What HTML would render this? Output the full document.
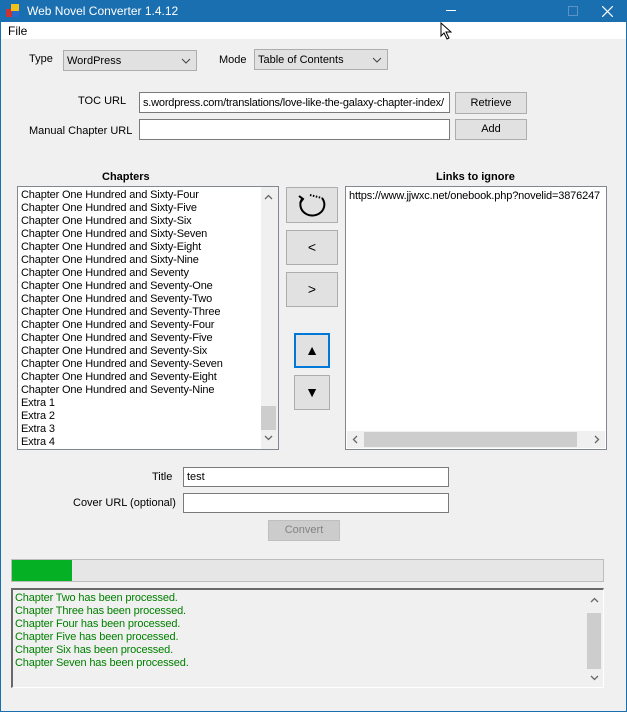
<!DOCTYPE html>
<html><head><style>
*{box-sizing:border-box;margin:0;padding:0}
body{width:627px;height:712px;overflow:hidden;background:#f0f0f0;font-family:"Liberation Sans",sans-serif;font-size:11px;color:#000;position:relative}
.a{position:absolute}
.win{left:0;top:0;width:627px;height:712px;border:1px solid #1a6fb0;border-top:none}
.title{left:0;top:0;width:627px;height:22px;background:#1a6fb0;color:#fff;font-size:12px}
.menu{left:1px;top:22px;width:625px;height:17px;background:#fff;font-size:12px}
.tb{background:#fff;border:1px solid #7a7a7a;padding:3px 3px;white-space:nowrap;overflow:hidden}
.btn{background:#e1e1e1;border:1px solid #adadad;text-align:center}
.cb{background:#e1e1e1;border:1px solid #adadad;padding:4px 3px;font-size:11px}
.list{background:#fff;border:1px solid #828790;overflow:hidden}
.list div{height:13px;line-height:13px;white-space:nowrap;letter-spacing:-0.15px}
.lbl{white-space:nowrap}
</style></head><body>
<div class="a title">
 <svg class="a" style="left:6px;top:4px" width="14" height="14"><rect x="0" y="5" width="6" height="8" fill="#c33"/><rect x="5" y="0" width="8" height="7" fill="#f3c21a"/><rect x="7" y="7" width="6" height="6" fill="#2a6ad0"/></svg>
 <span class="a" style="left:27px;top:4px">Web Novel Converter 1.4.12</span>
 <div class="a" style="left:446px;top:10px;width:10px;height:1px;background:#fff"></div>
 <div class="a" style="left:568px;top:6px;width:10px;height:10px;border:1px solid #5d92c4"></div>
 <svg class="a" style="left:602px;top:6px" width="11" height="11"><path d="M0 0L11 11M11 0L0 11" stroke="#fff" stroke-width="1.2"/></svg>
</div>
<div class="a menu"><span class="a" style="left:7px;top:2px">File</span></div>
<svg class="a" style="left:440px;top:22px" width="12" height="18"><path d="M1 1L1 14L4 11L7 17L9 16L6 10L11 10Z" fill="#fff" stroke="#000"/></svg>

<span class="a lbl" style="left:29px;top:53px">Type</span>
<div class="a cb" style="left:63px;top:50px;width:134px;height:21px">WordPress<svg class="a" style="right:5px;top:7px" width="10" height="6"><path d="M1 1L5 5L9 1" fill="none" stroke="#444"/></svg></div>
<span class="a lbl" style="left:219px;top:54px">Mode</span>
<div class="a cb" style="left:254px;top:49px;width:134px;height:21px">Table of Contents<svg class="a" style="right:5px;top:7px" width="10" height="6"><path d="M1 1L5 5L9 1" fill="none" stroke="#444"/></svg></div>

<span class="a lbl" style="left:78px;top:95px">TOC URL</span>
<div class="a tb" style="left:139px;top:92px;width:311px;height:21px;font-size:11px;padding-top:4px;letter-spacing:-0.2px">s.wordpress.com/translations/love-like-the-galaxy-chapter-index/</div>
<div class="a btn" style="left:455px;top:92px;width:72px;height:22px;line-height:20px">Retrieve</div>
<span class="a lbl" style="left:29px;top:125px">Manual Chapter URL</span>
<div class="a tb" style="left:139px;top:119px;width:311px;height:21px"></div>
<div class="a btn" style="left:455px;top:119px;width:72px;height:21px;line-height:19px">Add</div>

<span class="a lbl" style="left:102px;top:171px;font-weight:bold">Chapters</span>
<div class="a list" style="left:17px;top:186px;width:262px;height:264px;padding:2px 0 0 3px;font-size:11px;color:#000">
<div>Chapter One Hundred and Sixty-Four</div><div>Chapter One Hundred and Sixty-Five</div><div>Chapter One Hundred and Sixty-Six</div><div>Chapter One Hundred and Sixty-Seven</div><div>Chapter One Hundred and Sixty-Eight</div><div>Chapter One Hundred and Sixty-Nine</div><div>Chapter One Hundred and Seventy</div><div>Chapter One Hundred and Seventy-One</div><div>Chapter One Hundred and Seventy-Two</div><div>Chapter One Hundred and Seventy-Three</div><div>Chapter One Hundred and Seventy-Four</div><div>Chapter One Hundred and Seventy-Five</div><div>Chapter One Hundred and Seventy-Six</div><div>Chapter One Hundred and Seventy-Seven</div><div>Chapter One Hundred and Seventy-Eight</div><div>Chapter One Hundred and Seventy-Nine</div><div>Extra 1</div><div>Extra 2</div><div>Extra 3</div><div>Extra 4</div>
</div>
<div class="a" style="left:261px;top:187px;width:17px;height:262px;background:#f0f0f0"></div>
<div class="a" style="left:261px;top:406px;width:15px;height:24px;background:#cdcdcd"></div>
<svg class="a" style="left:264px;top:194px" width="9" height="6"><path d="M1 5L4.5 1.5L8 5" fill="none" stroke="#666" stroke-width="1.3"/></svg>
<svg class="a" style="left:264px;top:435px" width="9" height="6"><path d="M1 1L4.5 4.5L8 1" fill="none" stroke="#666" stroke-width="1.3"/></svg>

<div class="a btn" style="left:286px;top:187px;width:52px;height:36px"><svg width="50" height="34"><path d="M15 11 A12 11 0 1 0 35 10" fill="none" stroke="#000" stroke-width="2"/><path d="M12 8L16 11L13 15" fill="none" stroke="#000" stroke-width="2"/><path d="M23 7L35 10" stroke="#000" stroke-width="2" stroke-dasharray="1.5 1.5"/></svg></div>
<div class="a btn" style="left:286px;top:230px;width:52px;height:35px;line-height:33px;font-size:14px">&lt;</div>
<div class="a btn" style="left:286px;top:272px;width:52px;height:35px;line-height:33px;font-size:14px">&gt;</div>
<div class="a btn" style="left:294px;top:333px;width:36px;height:35px;border:2px solid #0078d7;line-height:31px;font-size:14px">&#9650;</div>
<div class="a btn" style="left:294px;top:375px;width:36px;height:35px;line-height:33px;font-size:14px">&#9660;</div>

<span class="a lbl" style="left:436px;top:171px;font-weight:bold">Links to ignore</span>
<div class="a list" style="left:345px;top:186px;width:262px;height:264px;padding:3px 0 0 3px;font-size:11px">
<div>https://www.jjwxc.net/onebook.php?novelid=3876247</div></div>
<div class="a" style="left:347px;top:431px;width:258px;height:17px;background:#f0f0f0"></div>
<div class="a" style="left:364px;top:432px;width:213px;height:15px;background:#cdcdcd"></div>
<svg class="a" style="left:352px;top:435px" width="6" height="9"><path d="M5 1L1.5 4.5L5 8" fill="none" stroke="#666" stroke-width="1.3"/></svg>
<svg class="a" style="left:594px;top:435px" width="6" height="9"><path d="M1 1L4.5 4.5L1 8" fill="none" stroke="#666" stroke-width="1.3"/></svg>

<span class="a lbl" style="left:152px;top:471px">Title</span>
<div class="a tb" style="left:183px;top:467px;width:266px;height:20px;padding-top:3px">test</div>
<span class="a lbl" style="left:73px;top:497px">Cover URL (optional)</span>
<div class="a tb" style="left:183px;top:493px;width:266px;height:20px"></div>
<div class="a btn" style="left:268px;top:520px;width:72px;height:21px;line-height:19px;background:#ccc;border-color:#bfbfbf;color:#838383;font-size:11px">Convert</div>

<div class="a" style="left:11px;top:559px;width:593px;height:23px;background:#e6e6e6;border:1px solid #bcbcbc"></div>
<div class="a" style="left:12px;top:560px;width:60px;height:21px;background:#06b025"></div>

<div class="a" style="left:11px;top:588px;width:593px;height:100px;background:#f0f0f0;border:1px solid #828282;border-top:2px solid #696969;border-left:2px solid #696969;border-right-color:#fff;border-bottom-color:#fff;color:#008000;padding:2px 0 0 2px;font-size:11px;line-height:13px;letter-spacing:-0.15px">
<div>Chapter Two has been processed.</div><div>Chapter Three has been processed.</div><div>Chapter Four has been processed.</div><div>Chapter Five has been processed.</div><div>Chapter Six has been processed.</div><div>Chapter Seven has been processed.</div>
</div>
<div class="a" style="left:587px;top:613px;width:14px;height:56px;background:#cdcdcd"></div>
<svg class="a" style="left:590px;top:597px" width="9" height="6"><path d="M1 5L4.5 1.5L8 5" fill="none" stroke="#666" stroke-width="1.3"/></svg>
<svg class="a" style="left:590px;top:675px" width="9" height="6"><path d="M1 1L4.5 4.5L8 1" fill="none" stroke="#666" stroke-width="1.3"/></svg>
<div class="a win"></div>
</body></html>
